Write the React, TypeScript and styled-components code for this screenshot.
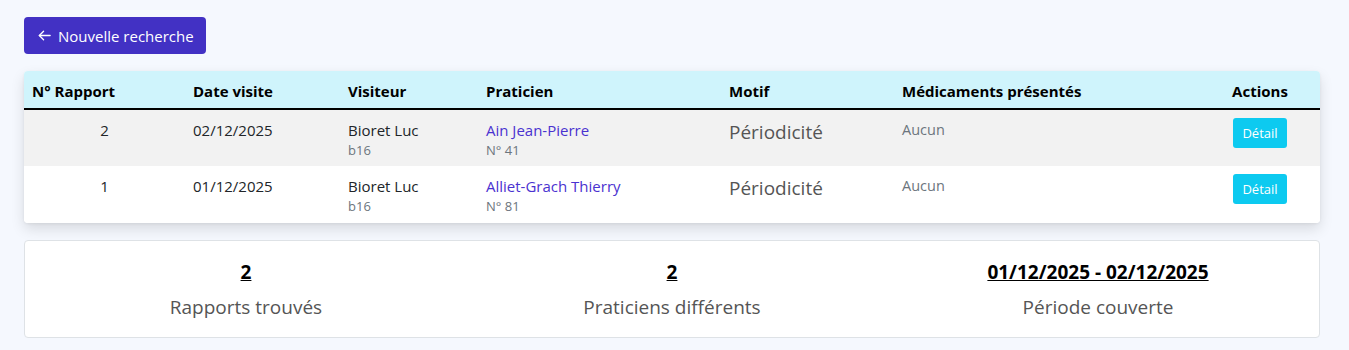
import styled, { createGlobalStyle } from "styled-components";

const GlobalStyle = createGlobalStyle`
  body {
    margin: 0;
    background: #f5f8fe;
    font-family: "Open Sans", "Noto Sans", sans-serif;
    color: #212529;
  }
`;

type Report = {
  id: number;
  date: string;
  visitor: string;
  visitorCode: string;
  practitioner: string;
  practitionerNo: number;
  reason: string;
  drugs: string;
};

const reports: Report[] = [
  {
    id: 2,
    date: "02/12/2025",
    visitor: "Bioret Luc",
    visitorCode: "b16",
    practitioner: "Ain Jean-Pierre",
    practitionerNo: 41,
    reason: "Périodicité",
    drugs: "Aucun",
  },
  {
    id: 1,
    date: "01/12/2025",
    visitor: "Bioret Luc",
    visitorCode: "b16",
    practitioner: "Alliet-Grach Thierry",
    practitionerNo: 81,
    reason: "Périodicité",
    drugs: "Aucun",
  },
];

const columns = [
  { label: "N° Rapport", width: 161, align: "left" },
  { label: "Date visite", width: 155, align: "left" },
  { label: "Visiteur", width: 138, align: "left" },
  { label: "Praticien", width: 243, align: "left" },
  { label: "Motif", width: 173, align: "left" },
  { label: "Médicaments présentés", width: 306, align: "left" },
  { label: "Actions", width: 120, align: "center" },
];

const Page = styled.div`
  padding: 17px 29px 14px 24px;
  display: flex;
  flex-direction: column;
  gap: 17px;
`;

const BackButton = styled.button`
  align-self: flex-start;
  display: flex;
  align-items: center;
  gap: 6px;
  height: 37px;
  padding: 0 12px 0 13px;
  border: none;
  border-radius: 4px;
  background: #4231c4;
  color: #fff;
  font-family: inherit;
  font-size: 15px;
  cursor: pointer;
`;

const TableCard = styled.div`
  border-radius: 4px;
  overflow: hidden;
  background: #fff;
  box-shadow: 0 6px 14px rgba(0, 0, 0, 0.12), 0 1px 3px rgba(0, 0, 0, 0.06);
`;

const Table = styled.table`
  width: 100%;
  border-collapse: collapse;
  table-layout: fixed;
  font-size: 15px;
`;

const Th = styled.th<{ $align: string }>`
  background: #cff4fc;
  color: #000;
  font-weight: 700;
  text-align: ${(p) => p.$align};
  padding: 9px 8px 6px;
  height: 38px;
  box-sizing: border-box;
  border-bottom: 2px solid #000;
  font-size: 15px;
`;

const Row = styled.tr<{ $striped: boolean }>`
  background: ${(p) => (p.$striped ? "#f2f2f2" : "#fff")};
  & + & td {
    border-top: 1px solid #dee2e6;
  }
`;

const Td = styled.td<{ $align?: string }>`
  vertical-align: top;
  text-align: ${(p) => p.$align || "left"};
  padding: 9px 8px 6px;
  height: 57px;
  box-sizing: border-box;
  line-height: 22px;
`;

const Main = styled.div<{ $color?: string }>`
  color: ${(p) => p.$color || "#212529"};
`;

const Sub = styled.div`
  font-size: 13px;
  line-height: 18px;
  color: #6c757d;
`;

const Reason = styled.div`
  font-size: 19px;
  line-height: 26px;
  color: #555;
`;

const Muted = styled.div`
  font-size: 14.5px;
  color: #6c757d;
`;

const DetailButton = styled.button`
  margin-top: -1px;
  height: 30px;
  padding: 0 9px;
  border: none;
  border-radius: 3px;
  background: #0dcaf0;
  color: #fff;
  font-family: inherit;
  font-size: 13px;
  cursor: pointer;
`;

const Stats = styled.div`
  display: grid;
  grid-template-columns: repeat(3, 1fr);
  background: #fff;
  border: 1px solid #dee2e6;
  border-radius: 4px;
  padding: 18px 8px 17px;
`;

const Stat = styled.div`
  display: flex;
  flex-direction: column;
  align-items: center;
  gap: 9px;
`;

const StatValue = styled.div`
  font-size: 19px;
  font-weight: 700;
  text-decoration: underline;
  color: #000;
  line-height: 26px;
`;

const StatLabel = styled.div`
  font-size: 19px;
  color: #555;
  line-height: 26px;
`;

const ArrowLeft = () => (
  <svg width="15" height="15" viewBox="0 0 16 16" fill="none" stroke="currentColor" strokeWidth="1.4" strokeLinecap="round" strokeLinejoin="round">
    <path d="M14 8H2.5" />
    <path d="M7 3.5 2.5 8 7 12.5" />
  </svg>
);

export default function App() {
  return (
    <>
      <GlobalStyle />
      <Page>
        <BackButton>
          <ArrowLeft />
          <span>Nouvelle recherche</span>
        </BackButton>
        <TableCard>
          <Table>
            <colgroup>
              {columns.map((c) => (
                <col key={c.label} style={{ width: c.width }} />
              ))}
            </colgroup>
            <thead>
              <tr>
                {columns.map((c) => (
                  <Th key={c.label} $align={c.align}>
                    {c.label}
                  </Th>
                ))}
              </tr>
            </thead>
            <tbody>
              {reports.map((r, i) => (
                <Row key={r.id} $striped={i % 2 === 0}>
                  <Td $align="center">{r.id}</Td>
                  <Td>{r.date}</Td>
                  <Td>
                    <Main>{r.visitor}</Main>
                    <Sub>{r.visitorCode}</Sub>
                  </Td>
                  <Td>
                    <Main $color="#4a32d0">{r.practitioner}</Main>
                    <Sub>N° {r.practitionerNo}</Sub>
                  </Td>
                  <Td>
                    <Reason>{r.reason}</Reason>
                  </Td>
                  <Td>
                    <Muted>{r.drugs}</Muted>
                  </Td>
                  <Td $align="center">
                    <DetailButton>Détail</DetailButton>
                  </Td>
                </Row>
              ))}
            </tbody>
          </Table>
        </TableCard>
        <Stats>
          <Stat>
            <StatValue>2</StatValue>
            <StatLabel>Rapports trouvés</StatLabel>
          </Stat>
          <Stat>
            <StatValue>2</StatValue>
            <StatLabel>Praticiens différents</StatLabel>
          </Stat>
          <Stat>
            <StatValue>01/12/2025 - 02/12/2025</StatValue>
            <StatLabel>Période couverte</StatLabel>
          </Stat>
        </Stats>
      </Page>
    </>
  );
}
